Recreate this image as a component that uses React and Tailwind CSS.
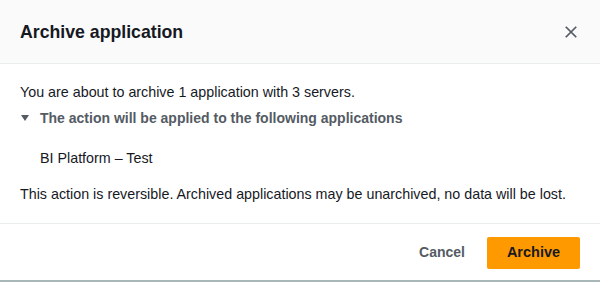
import React from "react";

export default function App() {
  return (
    <div className="w-[600px] h-[282px] bg-white flex flex-col text-[#16191f]" style={{ fontFamily: '"Liberation Sans", Arial, sans-serif' }}>
      <div className="h-[64px] shrink-0 bg-[#fafafa] border-b border-[#eaeded] flex items-center justify-between pl-5 pr-[22px]">
        <h2 className="text-[17.7px] font-bold leading-[22px]">Archive application</h2>
        <svg width="14" height="14" viewBox="0 0 16 16" className="text-[#545b64]">
          <path d="M2 2l12 12M14 2L2 14" stroke="currentColor" strokeWidth="2" fill="none" />
        </svg>
      </div>
      <div className="flex-1 flex flex-col px-5 pt-[18px] text-[14.3px] leading-[20px]">
        <p>You are about to archive 1 application with 3 servers.</p>
        <div className="flex items-center mt-[6px] text-[#545b64] font-bold text-[14px]">
          <svg width="8" height="8" viewBox="0 0 8 8" className="ml-[1px] mr-[11px]">
            <path d="M0 1h8L4 7z" fill="currentColor" />
          </svg>
          <span>The action will be applied to the following applications</span>
        </div>
        <p className="pl-5 mt-[20px]">BI Platform – Test</p>
        <p className="mt-[16px]">This action is reversible. Archived applications may be unarchived, no data will be lost.</p>
      </div>
      <div className="h-[57px] shrink-0 border-t border-[#eaeded] flex items-center justify-end gap-[22px] pr-5 pt-[1px]">
        <button className="text-[14px] font-bold text-[#545b64]">Cancel</button>
        <button className="w-[93px] h-[32px] rounded-[2px] bg-[#ff9900] text-[14.5px] font-bold text-[#16191f]">Archive</button>
      </div>
      <div className="h-[2px] shrink-0 bg-[#aab7b8]" />
    </div>
  );
}
